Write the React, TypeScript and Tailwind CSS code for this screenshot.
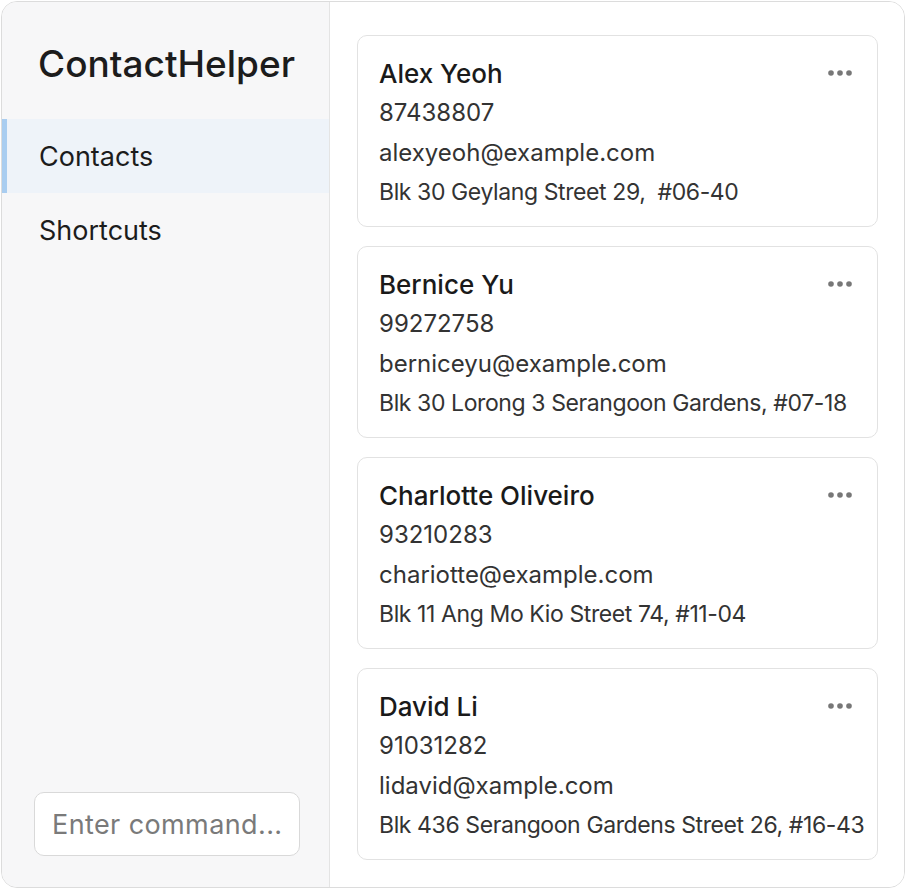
import { useState } from "react";

type Contact = {
  name: string;
  phone: string;
  email: string;
  address: string;
};

const contacts: Contact[] = [
  { name: "Alex Yeoh", phone: "87438807", email: "alexyeoh@example.com", address: "Blk 30 Geylang Street 29,  #06-40" },
  { name: "Bernice Yu", phone: "99272758", email: "berniceyu@example.com", address: "Blk 30 Lorong 3 Serangoon Gardens, #07-18" },
  { name: "Charlotte Oliveiro", phone: "93210283", email: "chariotte@example.com", address: "Blk 11 Ang Mo Kio Street 74, #11-04" },
  { name: "David Li", phone: "91031282", email: "lidavid@xample.com", address: "Blk 436 Serangoon Gardens Street 26, #16-43" },
];

function MoreDots() {
  return (
    <svg width="26" height="8" viewBox="0 0 26 8" className="mt-[14px] shrink-0">
      <circle cx="4" cy="4" r="2.8" fill="#777" />
      <circle cx="13" cy="4" r="2.8" fill="#777" />
      <circle cx="22" cy="4" r="2.8" fill="#777" />
    </svg>
  );
}

function ContactCard({ contact }: { contact: Contact }) {
  return (
    <div className="h-[192px] w-[521px] shrink-0 rounded-[10px] border border-[#e2e2e2] bg-white pl-[21px] pr-[24px] pt-[19px]">
      <div className="flex items-start justify-between">
        <div className="text-[26px] leading-[38px] font-medium text-[#1a1a1a]">{contact.name}</div>
        <MoreDots />
      </div>
      <div className="text-[24px] leading-[40px] text-[#333]">{contact.phone}</div>
      <div className="text-[24px] leading-[40px] text-[#333]">{contact.email}</div>
      <div className="text-[23px] leading-[39px] tracking-[-0.4px] text-[#333] whitespace-pre">{contact.address}</div>
    </div>
  );
}

function App() {
  const [active, setActive] = useState("Contacts");
  const [command, setCommand] = useState("");

  return (
    <div className="h-[889px] w-[906px] bg-white p-[1px] font-['Inter','Liberation_Sans',sans-serif]">
      <div className="flex h-full overflow-hidden rounded-[16px] border border-[#dcdcdc]">
        <aside className="flex w-[328px] shrink-0 flex-col border-r border-[#e4e4e4] bg-[#f7f7f8]">
          <h1 className="pl-[36px] pt-[40px] text-[37px] leading-[44px] font-medium text-[#1c1c1c]">ContactHelper</h1>
          <nav className="mt-[33px] flex flex-col">
            {["Contacts", "Shortcuts"].map((item) => (
              <button
                key={item}
                onClick={() => setActive(item)}
                className={
                  active === item
                    ? "h-[74px] border-l-[5px] border-[#a9cdf0] bg-[#eef3f9] pl-[32px] pt-[3px] text-left text-[27px] text-[#1c1c1c]"
                    : "h-[74px] border-l-[5px] border-transparent pl-[32px] pt-[3px] text-left text-[27px] text-[#1c1c1c]"
                }
              >
                {item}
              </button>
            ))}
          </nav>
          <div className="mt-auto px-[32px] pb-[31px]">
            <input
              value={command}
              onChange={(e) => setCommand(e.target.value)}
              placeholder="Enter command..."
              className="h-[64px] w-[266px] rounded-[10px] border border-[#d9d9d9] bg-white pl-[17px] pr-[6px] text-[27px] tracking-[0.4px] text-[#333] outline-none placeholder:text-[#7a7a7a]"
            />
          </div>
        </aside>
        <main className="flex min-w-0 flex-1 flex-col gap-[19px] bg-white pl-[27px] pt-[33px]">
          {contacts.map((c) => (
            <ContactCard key={c.name} contact={c} />
          ))}
        </main>
      </div>
    </div>
  );
}

export default App;
